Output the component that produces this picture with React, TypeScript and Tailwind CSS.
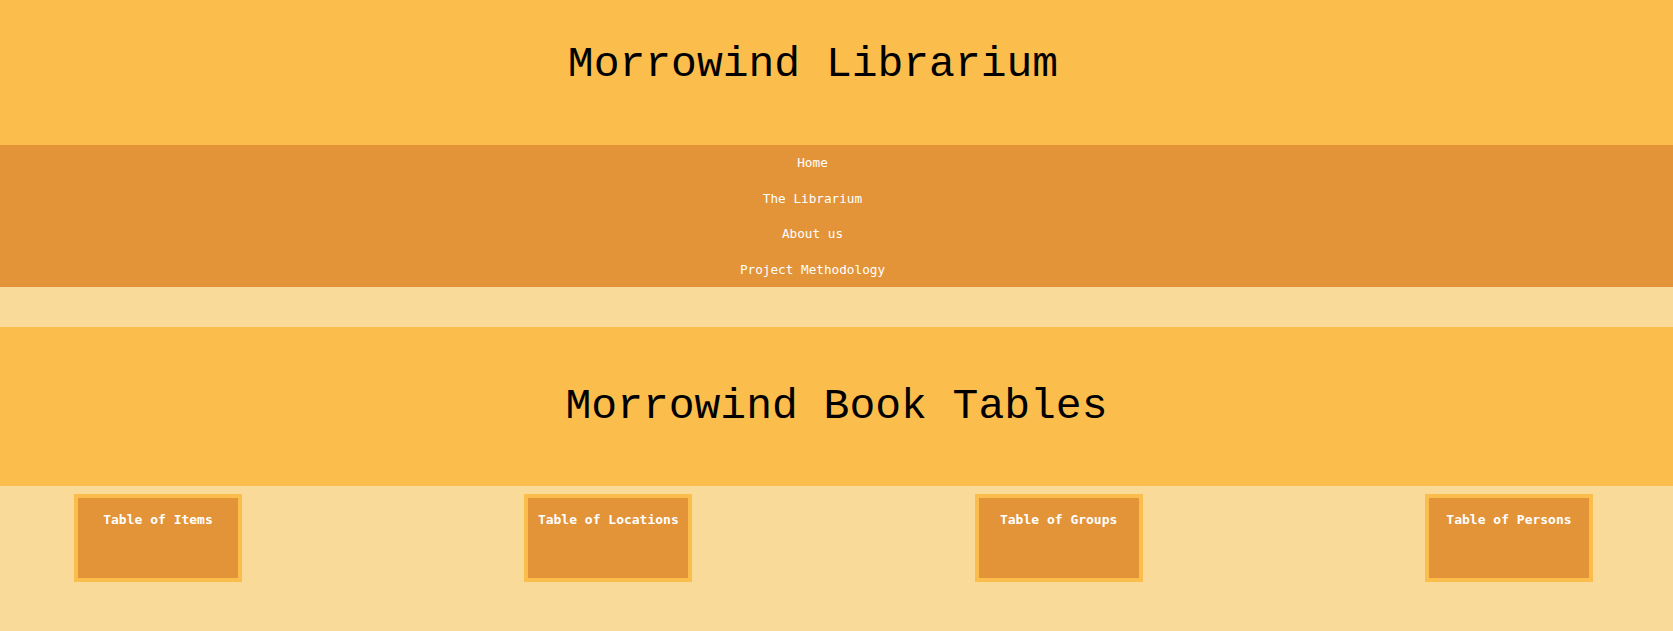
import React from 'react';

const navLinks = ['Home', 'The Librarium', 'About us', 'Project Methodology'];
const tables = ['Table of Items', 'Table of Locations', 'Table of Groups', 'Table of Persons'];

export default function App() {
  return (
    <div className="min-h-[631px] w-full bg-[#fada99] font-['Liberation_Mono',monospace]">
      {/* Site header */}
      <header className="h-[145px] bg-[#fbbd4c] pr-[47px] pt-[40px] text-center">
        <h1 className="text-[43px] leading-[50px] text-black">Morrowind Librarium</h1>
      </header>

      {/* Navigation */}
      <nav className="bg-[#e39439]">
        <ul className="flex flex-col">
          {navLinks.map((link) => (
            <li
              key={link}
              className="flex h-[35.5px] items-center justify-center pr-[48px] font-['DejaVu_Sans_Mono',monospace] text-[12.7px] text-white"
            >
              <a href="#">{link}</a>
            </li>
          ))}
        </ul>
      </nav>

      <div className="h-[40px]" />

      {/* Page heading */}
      <section className="flex h-[159px] items-center justify-center bg-[#fbbd4c]">
        <h2 className="text-[43px] leading-[50px] text-black">Morrowind Book Tables</h2>
      </section>

      {/* Table links */}
      <div className="flex justify-between pl-[74px] pr-[80px] pt-[8px]">
        {tables.map((t) => (
          <a
            key={t}
            href="#"
            className="h-[88px] w-[168px] border-4 border-[#fbbd4c] bg-[#e39439] pt-[14px] text-center font-['DejaVu_Sans_Mono',monospace] text-[13px] font-bold leading-[16px] text-white"
          >
            {t}
          </a>
        ))}
      </div>
    </div>
  );
}
